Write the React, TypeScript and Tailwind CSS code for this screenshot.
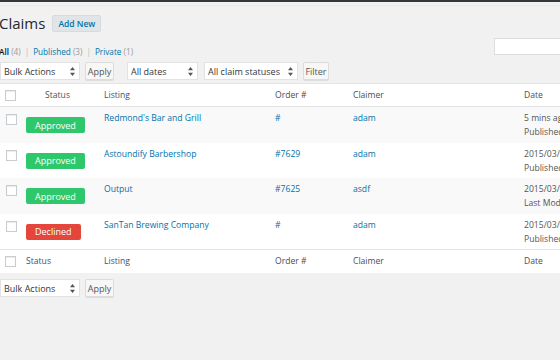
import React from 'react';

type Claim = {
  status: 'Approved' | 'Declined';
  listing: string;
  order: string;
  claimer: string;
  date: string;
  state: string;
};

const claims: Claim[] = [
  { status: 'Approved', listing: "Redmond's Bar and Grill", order: '#', claimer: 'adam', date: '5 mins ago', state: 'Published' },
  { status: 'Approved', listing: 'Astoundify Barbershop', order: '#7629', claimer: 'adam', date: '2015/03/05', state: 'Published' },
  { status: 'Approved', listing: 'Output', order: '#7625', claimer: 'asdf', date: '2015/03/05', state: 'Last Modified' },
  { status: 'Declined', listing: 'SanTan Brewing Company', order: '#', claimer: 'adam', date: '2015/03/05', state: 'Published' },
];

const grid = 'grid grid-cols-[26px_78px_171px_78px_171px_200px]';

const Arrows = () => (
  <svg width="5" height="9" viewBox="0 0 5 9" className="shrink-0">
    <path d="M2.5 0 L5 3.2 H0 Z M2.5 9 L5 5.8 H0 Z" fill="#555" />
  </svg>
);

const Select: React.FC<{ label: string; width: string }> = ({ label, width }) => (
  <div className={`${width} h-[18px] bg-white border border-[#e2e2e2] flex items-center justify-between pl-[3px] pr-[4px] text-[#32373c]`}>
    <span>{label}</span>
    <Arrows />
  </div>
);

const Button: React.FC<{ label: string; width: string }> = ({ label, width }) => (
  <div className={`${width} h-[18px] bg-[#f7f7f7] border border-[#dcdcdc] shadow-[0_1px_0_#ddd] rounded-[2px] flex items-center justify-center text-[#555]`}>
    {label}
  </div>
);

const Checkbox = () => (
  <div className="w-[11px] h-[11px] bg-white border border-[#c9cccf] shadow-[inset_0_1px_1px_rgba(0,0,0,0.08)]" />
);

const HeaderRow: React.FC<{ footer?: boolean }> = ({ footer }) => (
  <div className={`${grid} h-[24px] items-center bg-white border-[#e5e5e5] ${footer ? 'border-t' : 'border-y'} text-[#4a4f54]`}>
    <div className="pl-[5px]"><Checkbox /></div>
    <div className={footer ? 'pl-[0px]' : 'pl-[19px]'}>Status</div>
    <div>Listing</div>
    <div>Order #</div>
    <div>Claimer</div>
    <div>Date</div>
  </div>
);

export default function App() {
  return (
    <div className="w-[560px] h-[360px] overflow-hidden bg-[#f1f1f1] text-[9px] leading-[13px] text-[#444]" style={{ fontFamily: '"Open Sans", "Liberation Sans", sans-serif' }}>
      <div className="h-[2px] bg-[#32373c]" />
      <div className="h-[1px] mt-[3px] bg-[#e8e8e8]" />

      {/* Title */}
      <div className="flex items-center gap-[7px] mt-[8px] h-[18px] -ml-[1px]">
        <h1 className="text-[15px] leading-[20px] text-[#23282d]">Claims</h1>
        <div className="h-[17px] px-[5px] flex items-center bg-[#e2e5e8] border border-[#d8dadd] rounded-[2px] text-[8.5px] text-[#0073aa] font-semibold">
          Add New
        </div>
      </div>

      {/* Views + search */}
      <div className="flex justify-between mt-[6px] h-[20px]">
        <div className="self-end text-[8.2px] leading-[12px] -ml-[1px] text-[#666]">
          <span className="text-[#111] font-semibold">All</span> <span className="text-[#999]">(4)</span>
          <span className="text-[#bbb] mx-[4px]">|</span>
          <span className="text-[#0073aa]">Published</span> <span className="text-[#999]">(3)</span>
          <span className="text-[#bbb] mx-[4px]">|</span>
          <span className="text-[#0073aa]">Private</span> <span className="text-[#999]">(1)</span>
        </div>
        <div className="w-[68px] h-[17px] bg-white border border-[#ddd] -mr-[2px]" />
      </div>

      {/* Top toolbar */}
      <div className="flex items-center mt-[4px]">
        <Select label="Bulk Actions" width="w-[80px]" />
        <div className="ml-[5px]"><Button label="Apply" width="w-[29px]" /></div>
        <div className="ml-[13px]"><Select label="All dates" width="w-[71px]" /></div>
        <div className="ml-[6px]"><Select label="All claim statuses" width="w-[94px]" /></div>
        <div className="ml-[5px]"><Button label="Filter" width="w-[26px]" /></div>
      </div>

      {/* Table */}
      <div className="mt-[3px] w-[724px] text-[8.6px]">
        <HeaderRow />
        {claims.map((c, i) => (
          <div key={i} className={`${grid} h-[35.5px] ${i % 2 === 0 ? 'bg-[#f9f9f9]' : 'bg-white'}`}>
            <div className="pl-[6px] pt-[7px]"><Checkbox /></div>
            <div className="pt-[10px]">
              <span className={`inline-flex h-[16px] items-center px-[9px] rounded-[2px] text-[9px] text-white ${c.status === 'Approved' ? 'bg-[#2fc76b]' : 'bg-[#e4463b]'}`}>
                {c.status}
              </span>
            </div>
            <div className="pt-[5px] text-[#0073aa]">{c.listing}</div>
            <div className="pt-[5px] text-[#0073aa]">{c.order}</div>
            <div className="pt-[5px] text-[#0073aa]">{c.claimer}</div>
            <div className="pt-[4px] leading-[14px] text-[#555]">
              <div>{c.date}</div>
              <div>{c.state}</div>
            </div>
          </div>
        ))}
        <HeaderRow footer />
      </div>

      {/* Bottom toolbar */}
      <div className="flex items-center mt-[6px]">
        <Select label="Bulk Actions" width="w-[80px]" />
        <div className="ml-[5px]"><Button label="Apply" width="w-[29px]" /></div>
      </div>
    </div>
  );
}
